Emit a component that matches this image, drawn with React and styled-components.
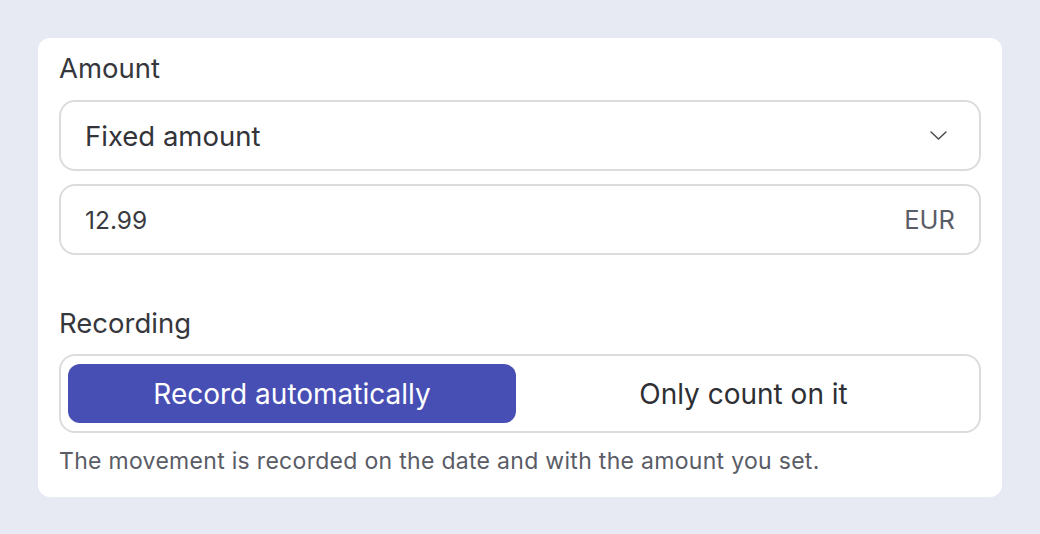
import React, { useState } from "react";
import styled, { createGlobalStyle } from "styled-components";

const GlobalStyle = createGlobalStyle`
  html, body {
    margin: 0;
    padding: 0;
    background: #e7e9f3;
  }
  body {
    font-family: Inter, "Noto Sans", sans-serif;
    -webkit-font-smoothing: antialiased;
  }
`;

const Page = styled.div`
  box-sizing: border-box;
  width: 1040px;
  height: 534px;
  padding: 38px;
`;

const Card = styled.div`
  box-sizing: border-box;
  background: #ffffff;
  border-radius: 12px;
  padding: 13px 21px 22px;
  display: flex;
  flex-direction: column;
`;

const Label = styled.div`
  font-size: 27.5px;
  line-height: 34px;
  color: #36373d;
  margin-bottom: 15px;
  margin-top: ${(p) => (p.$spaced ? "51px" : "0")};
`;

const Field = styled.div`
  box-sizing: border-box;
  height: 71px;
  border: 2px solid #dcdcde;
  border-radius: 16px;
  padding: 0 ${(p) => (p.$select ? "32px" : "24px")} 0 24px;
  display: flex;
  align-items: center;
  justify-content: space-between;
  font-size: 27.5px;
  color: #333439;
  & + & {
    margin-top: 13px;
  }
`;

const Suffix = styled.span`
  font-size: 25.5px;
  color: #5b5d66;
`;

const Value = styled.span`
  font-size: 24.5px;
  color: #3a3b40;
`;

const Segmented = styled.div`
  box-sizing: border-box;
  display: grid;
  grid-template-columns: 448px 1fr;
  border: 2px solid #dcdcde;
  border-radius: 16px;
  padding: 8px 8px 8px 7px;
  margin-top: -1px;
`;

const Option = styled.button`
  height: 59px;
  border: none;
  border-radius: 12px;
  font-family: inherit;
  font-size: 28px;
  cursor: pointer;
  background: ${(p) => (p.$active ? "#474fb4" : "transparent")};
  color: ${(p) => (p.$active ? "#ffffff" : "#2e2f34")};
`;

const Hint = styled.p`
  margin: 14px 0 0;
  font-size: 23px;
  line-height: 28px;
  letter-spacing: 0.3px;
  color: #5a5c66;
`;

const Chevron = () => (
  <svg width="17" height="9" viewBox="0 0 17 9" fill="none">
    <path d="M1 1l7.5 7 7.5-7" stroke="#45464c" strokeWidth="1.4" strokeLinecap="round" strokeLinejoin="round" />
  </svg>
);

const App = () => {
  const [mode, setMode] = useState("auto");
  return (
    <Page>
      <GlobalStyle />
      <Card>
        <Label>Amount</Label>
        <Field $select>
          <span>Fixed amount</span>
          <Chevron />
        </Field>
        <Field>
          <Value>12.99</Value>
          <Suffix>EUR</Suffix>
        </Field>
        <Label $spaced>Recording</Label>
        <Segmented>
          <Option $active={mode === "auto"} onClick={() => setMode("auto")}>
            Record automatically
          </Option>
          <Option $active={mode === "count"} onClick={() => setMode("count")}>
            Only count on it
          </Option>
        </Segmented>
        <Hint>The movement is recorded on the date and with the amount you set.</Hint>
      </Card>
    </Page>
  );
};

export default App;
